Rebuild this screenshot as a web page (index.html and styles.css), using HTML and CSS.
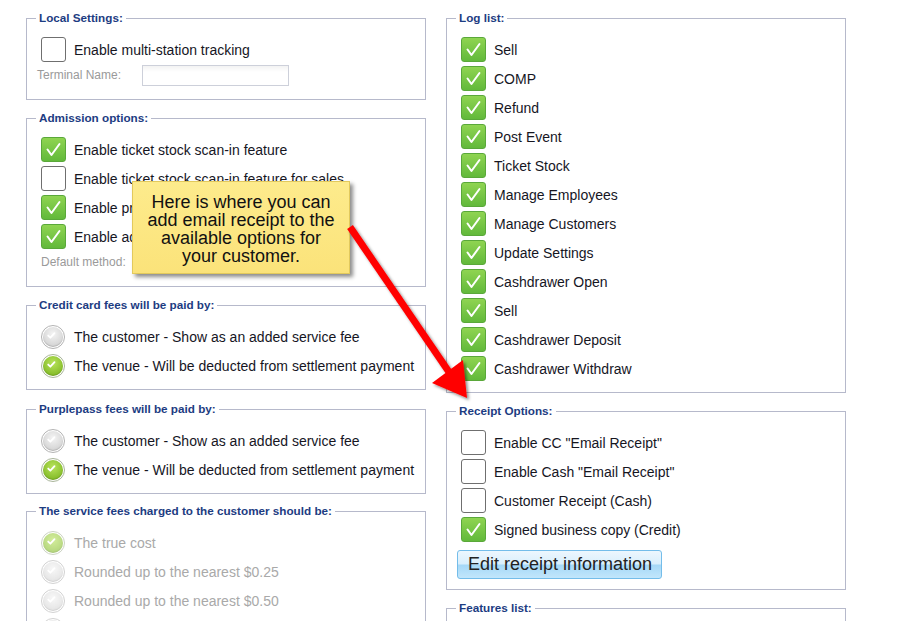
FILE: index.html
```html
<!DOCTYPE html>
<html>
<head>
  <title>Settings</title>
  <link rel="stylesheet" href="styles.css">
</head>

<body>
  <div class="page">
    <div class="column">
      <fieldset class="group">
        <legend>Local Settings:</legend>
        <div class="opt"><span class="box"></span>Enable multi-station tracking</div>
        <div class="field"><span class="fieldLabel">Terminal Name:</span><span class="textInput"></span></div>
      </fieldset>

      <fieldset class="group">
        <legend>Admission options:</legend>
        <div class="opt"><span class="box on"><svg viewBox="0 0 25 25"><path d="M6 12.5 L10.3 18.5 L19 6.5"/></svg></span>Enable ticket stock scan-in feature</div>
        <div class="opt"><span class="box"></span>Enable ticket stock scan-in feature for sales</div>
        <div class="opt"><span class="box on"><svg viewBox="0 0 25 25"><path d="M6 12.5 L10.3 18.5 L19 6.5"/></svg></span>Enable print at home tickets</div>
        <div class="opt"><span class="box on"><svg viewBox="0 0 25 25"><path d="M6 12.5 L10.3 18.5 L19 6.5"/></svg></span>Enable admission scanning</div>
        <div class="field indent"><span class="fieldLabel">Default method:</span><span class="textInput"></span></div>
      </fieldset>

      <fieldset class="group radios">
        <legend>Credit card fees will be paid by:</legend>
        <div class="opt"><span class="radio"><svg viewBox="0 0 24 24"><path d="M7.5 12.3 L10.6 15.4 L16.6 8.8"/></svg></span>The customer - Show as an added service fee</div>
        <div class="opt"><span class="radio on"><svg viewBox="0 0 24 24"><path d="M7.5 12.3 L10.6 15.4 L16.6 8.8"/></svg></span>The venue - Will be deducted from settlement payment</div>
      </fieldset>

      <fieldset class="group radios last">
        <legend>Purplepass fees will be paid by:</legend>
        <div class="opt"><span class="radio"><svg viewBox="0 0 24 24"><path d="M7.5 12.3 L10.6 15.4 L16.6 8.8"/></svg></span>The customer - Show as an added service fee</div>
        <div class="opt"><span class="radio on"><svg viewBox="0 0 24 24"><path d="M7.5 12.3 L10.6 15.4 L16.6 8.8"/></svg></span>The venue - Will be deducted from settlement payment</div>
      </fieldset>

      <fieldset class="group radios disabled">
        <legend>The service fees charged to the customer should be:</legend>
        <div class="opt"><span class="radio on"><svg viewBox="0 0 24 24"><path d="M7.5 12.3 L10.6 15.4 L16.6 8.8"/></svg></span>The true cost</div>
        <div class="opt"><span class="radio"><svg viewBox="0 0 24 24"><path d="M7.5 12.3 L10.6 15.4 L16.6 8.8"/></svg></span>Rounded up to the nearest $0.25</div>
        <div class="opt"><span class="radio"><svg viewBox="0 0 24 24"><path d="M7.5 12.3 L10.6 15.4 L16.6 8.8"/></svg></span>Rounded up to the nearest $0.50</div>
        <div class="opt"><span class="radio"><svg viewBox="0 0 24 24"><path d="M7.5 12.3 L10.6 15.4 L16.6 8.8"/></svg></span>Rounded up to the nearest $1.00</div>
      </fieldset>
    </div>

    <div class="column">
      <fieldset class="group">
        <legend>Log list:</legend>
        <div class="opt"><span class="box on"><svg viewBox="0 0 25 25"><path d="M6 12.5 L10.3 18.5 L19 6.5"/></svg></span>Sell</div>
        <div class="opt"><span class="box on"><svg viewBox="0 0 25 25"><path d="M6 12.5 L10.3 18.5 L19 6.5"/></svg></span>COMP</div>
        <div class="opt"><span class="box on"><svg viewBox="0 0 25 25"><path d="M6 12.5 L10.3 18.5 L19 6.5"/></svg></span>Refund</div>
        <div class="opt"><span class="box on"><svg viewBox="0 0 25 25"><path d="M6 12.5 L10.3 18.5 L19 6.5"/></svg></span>Post Event</div>
        <div class="opt"><span class="box on"><svg viewBox="0 0 25 25"><path d="M6 12.5 L10.3 18.5 L19 6.5"/></svg></span>Ticket Stock</div>
        <div class="opt"><span class="box on"><svg viewBox="0 0 25 25"><path d="M6 12.5 L10.3 18.5 L19 6.5"/></svg></span>Manage Employees</div>
        <div class="opt"><span class="box on"><svg viewBox="0 0 25 25"><path d="M6 12.5 L10.3 18.5 L19 6.5"/></svg></span>Manage Customers</div>
        <div class="opt"><span class="box on"><svg viewBox="0 0 25 25"><path d="M6 12.5 L10.3 18.5 L19 6.5"/></svg></span>Update Settings</div>
        <div class="opt"><span class="box on"><svg viewBox="0 0 25 25"><path d="M6 12.5 L10.3 18.5 L19 6.5"/></svg></span>Cashdrawer Open</div>
        <div class="opt"><span class="box on"><svg viewBox="0 0 25 25"><path d="M6 12.5 L10.3 18.5 L19 6.5"/></svg></span>Sell</div>
        <div class="opt"><span class="box on"><svg viewBox="0 0 25 25"><path d="M6 12.5 L10.3 18.5 L19 6.5"/></svg></span>Cashdrawer Deposit</div>
        <div class="opt"><span class="box on"><svg viewBox="0 0 25 25"><path d="M6 12.5 L10.3 18.5 L19 6.5"/></svg></span>Cashdrawer Withdraw</div>
      </fieldset>

      <fieldset class="group receipt">
        <legend>Receipt Options:</legend>
        <div class="opt"><span class="box"></span>Enable CC "Email Receipt"</div>
        <div class="opt"><span class="box"></span>Enable Cash "Email Receipt"</div>
        <div class="opt"><span class="box"></span>Customer Receipt (Cash)</div>
        <div class="opt"><span class="box on"><svg viewBox="0 0 25 25"><path d="M6 12.5 L10.3 18.5 L19 6.5"/></svg></span>Signed business copy (Credit)</div>
        <button class="editBtn">Edit receipt information</button>
      </fieldset>

      <fieldset class="group">
        <legend>Features list:</legend>
        <div class="opt"><span class="box on"><svg viewBox="0 0 25 25"><path d="M6 12.5 L10.3 18.5 L19 6.5"/></svg></span>Reserved seating</div>
        <div class="opt"><span class="box on"><svg viewBox="0 0 25 25"><path d="M6 12.5 L10.3 18.5 L19 6.5"/></svg></span>General admission</div>
      </fieldset>
    </div>

    <!-- annotation drawn over the screenshot -->
    <div class="callout">Here is where you can add email receipt to the available options for your customer.</div>
    <svg class="arrow" width="900" height="621" viewBox="0 0 900 621">
      <defs>
        <filter id="shade" x="-20%" y="-20%" width="140%" height="140%">
          <feDropShadow dx="2" dy="2" stdDeviation="1.6" flood-color="#000" flood-opacity="0.45"/>
        </filter>
      </defs>
      <g filter="url(#shade)" fill="#ff0000">
        <line x1="350" y1="227" x2="449" y2="372" stroke="#ff0000" stroke-width="7"/>
        <polygon points="432,383 463,360 467,398"/>
      </g>
    </svg>
  </div>
</body>
</html>
```

FILE: styles.css
```css
html, body {margin: 0; overflow: hidden; background: #fff;}
body {font-family: 'Liberation Sans', Arial, sans-serif; font-size: 14px; color: #16161f;}
.page {position: relative; display: grid; grid-template-columns: 400px 400px; column-gap: 20px; align-items: start; padding: 11px 0 0 26px; height: 610px;}
.column {display: flex; flex-direction: column;}

.group {margin: 0 0 11px; padding: 10px 10px 9px 14px; border: 1px solid #b6b9cb; min-width: 0;}
.group legend {margin-left: -5px; padding: 0 3px; font-size: 11.7px; line-height: 14px; font-weight: bold; color: #1d3c82;}
.radios {margin-bottom: 12px;}
.radios.last {margin-bottom: 10px;}
.receipt {padding-bottom: 10px;}

.opt {display: flex; align-items: center; height: 29px; white-space: nowrap;}
.box, .radio {flex: none; width: 25px; height: 25px; margin-right: 8px; box-sizing: border-box;}
.box {border: 1px solid #6f6f6f; border-radius: 3px; background: #fff;}
.box.on {border-color: #5aa83a; background: linear-gradient(#8fd451, #62b93b);}
.box svg {display: block; width: 23px; height: 23px;}
.box svg path {fill: none; stroke: #fff; stroke-width: 2.2; stroke-linecap: round; stroke-linejoin: round;}

.radio {width: 24px; height: 24px; margin-right: 9px; border-radius: 50%; border: 1px solid #b3b3b3; padding: 1px; background: #fff;}
.radio svg {display: block; width: 20px; height: 20px; border-radius: 50%; background: radial-gradient(circle at 50% 35%, #f4f4f4, #c9c9c9); box-shadow: inset 0 -1px 1px rgba(0,0,0,0.15);}
.radio.on {border-color: #a9b59a;}
.radio.on svg {background: radial-gradient(circle at 50% 35%, #b8e35a, #72ae18);}
.radio svg path {fill: none; stroke: #fff; stroke-width: 2.6; stroke-linecap: round; stroke-linejoin: round; transform: scale(0.833); transform-origin: 0 0;}

.disabled .opt {color: #a9a9a9;}
.disabled .radio {opacity: 0.6;}

.field {display: flex; align-items: center; height: 22px; margin: 0 0 4px -4px;}
.field.indent {margin: 0 0 4px 0;}
.fieldLabel {width: 105px; font-size: 12px; color: #9a9a9a;}
.field.indent .fieldLabel {width: 101px;}
.textInput {width: 147px; height: 21px; box-sizing: border-box; border: 1px solid #cdd0da; background: linear-gradient(#f3f3f3, #fff 6px);}

.editBtn {display: block; width: 205px; height: 29px; margin: 6px 0 0 -4px; padding: 0 0 0 10px; text-align: left; font-family: 'Liberation Sans', Arial, sans-serif; font-size: 18px; color: #222; border: 1px solid #74bdea; border-radius: 3px; background: linear-gradient(#edf7fe 0%, #d9effc 48%, #a5d8f7 52%, #c2e6fb 100%);}

.callout {position: absolute; left: 132px; top: 181px; width: 218px; height: 93px; box-sizing: border-box; padding: 11px 12px 0; text-align: center; font-size: 18px; line-height: 18px; color: #111; background: linear-gradient(#fdeb8c, #fbe37a); border: 1px solid #e2c95c; box-shadow: 3px 3px 4px rgba(0,0,0,0.45);}
.arrow {position: absolute; left: 0; top: 0; pointer-events: none;}
```
